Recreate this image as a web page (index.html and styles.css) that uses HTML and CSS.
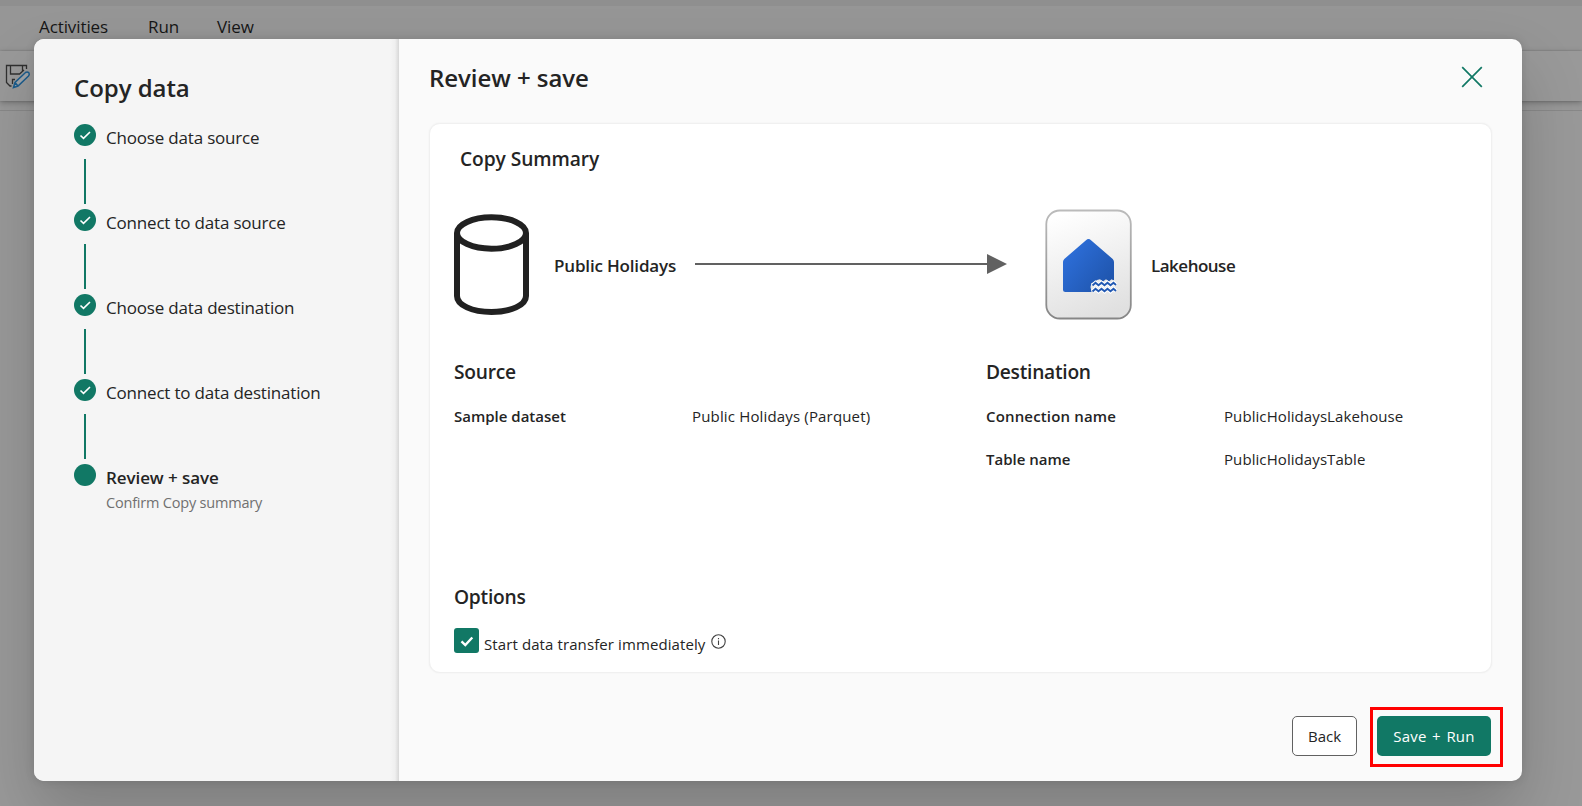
FILE: index.html
```html
<!DOCTYPE html>
<html lang="en">
<head>
<meta charset="utf-8">
<title>Copy data</title>
<link rel="stylesheet" href="styles.css">
</head>
<body>
<div class="workspace">
  <nav class="tabs"><span class="tab t-act">Activities</span><span class="tab t-run">Run</span><span class="tab t-view">View</span></nav>
  <div class="toolbar">
    <svg class="save-icon" width="26" height="26" viewBox="0 0 26 26" fill="none">
      <path d="M21.5 5V1.5H1.5V18.5L5 22H6.500M5.500 1.500V10H14.500L19 6M17.500 1.500V7M7.500 20V15.500H10" stroke="#303030" stroke-width="1.300"/>
      <path d="M8.500 23.500L10 18.500L20.500 8.500Q22.500 7.500 24 9Q24.800 10.500 23.500 12L13 22Z M10 18.500L13 22" stroke="#1b5c8c" stroke-width="1.500" fill="#a0a4a8"/>
    </svg>
  </div>
  <div class="canvas"></div>
</div>
<main class="dialog">
  <aside class="sidebar">
    <h1 class="side-title">Copy data</h1>
    <ol class="steps">
      <li class="step"><span class="dot"><svg width="22" height="22" viewBox="0 0 22 22"><path d="M6.500 11.500L9.500 14.300L16 8" /></svg></span><span class="step-label">Choose data source</span></li>
      <li class="step"><span class="dot"><svg width="22" height="22" viewBox="0 0 22 22"><path d="M6.500 11.500L9.500 14.300L16 8" /></svg></span><span class="step-label">Connect to data source</span></li>
      <li class="step"><span class="dot"><svg width="22" height="22" viewBox="0 0 22 22"><path d="M6.500 11.500L9.500 14.300L16 8" /></svg></span><span class="step-label">Choose data destination</span></li>
      <li class="step"><span class="dot"><svg width="22" height="22" viewBox="0 0 22 22"><path d="M6.500 11.500L9.500 14.300L16 8" /></svg></span><span class="step-label">Connect to data destination</span></li>
      <li class="step"><span class="dot"></span><span class="step-text"><span class="step-label current">Review + save</span><span class="step-sub">Confirm Copy summary</span></span></li>
    </ol>
  </aside>
  <section class="content">
    <header class="head"><h2 class="title">Review + save</h2>
      <svg class="close" width="22" height="22" viewBox="0 0 22 22"><path d="M1.200 1.200L20.800 20.800M20.800 1.200L1.200 20.800"/></svg>
    </header>
    <div class="card">
      <h3 class="summary-title">Copy Summary</h3>
      <div class="flow">
        <svg class="cylinder" width="75" height="102" viewBox="0 0 75 102"><ellipse cx="37.500" cy="19" rx="34.500" ry="15.700"/><path d="M3 19V82C3 91 18 98 37.500 98S72 91 72 82V19"/></svg>
        <span class="node n-src">Public Holidays</span>
        <svg class="arrow" width="312" height="20" viewBox="0 0 312 20"><path d="M0 9H293V11H0ZM292 0L312 10L292 20Z"/></svg>
        <svg class="lake" width="87" height="111" viewBox="0 0 87 111">
          <defs>
            <linearGradient id="tile" x1="0.300" y1="0" x2="0.600" y2="1"><stop offset="0" stop-color="#fff"/><stop offset="1" stop-color="#e0e0e0"/></linearGradient>
            <linearGradient id="edge" x1="0" y1="0" x2="0" y2="1"><stop offset="0" stop-color="#bbb"/><stop offset="1" stop-color="#868686"/></linearGradient>
            <linearGradient id="house" x1="0" y1="0.200" x2="1" y2="1"><stop offset="0" stop-color="#2e70dc"/><stop offset="1" stop-color="#1d51a6"/></linearGradient>
          </defs>
          <rect x="1.300" y="1.500" width="84.500" height="108" rx="13.500" fill="url(#tile)" stroke="url(#edge)" stroke-width="1.800"/>
          <path d="M41 31.200Q43.500 28.800 46 31.200L67.700 50Q69 51.300 69 53V71.500L66.500 70.200L64 72.500L61 70.200L58 72.500L55 70.200L52 71L49 73.500L46.500 74L45.500 78L46.500 83H20.500Q18 83 18 80.500V53Q18 51.300 19.300 50Z" fill="url(#house)"/>
          <path d="M47.500 76.500L50.500 73.800L53.500 76.300L56.500 73.800L59.500 76.300L62.500 73.800L65.500 76.300L68.500 73.800L71 76M47.500 82.500L50.500 79.800L53.500 82.300L56.500 79.800L59.500 82.300L62.500 79.800L65.500 82.300L68.500 79.800L71 82" fill="none" stroke="#fff" stroke-width="4"/>
          <path d="M47.500 76.500L50.500 73.800L53.500 76.300L56.500 73.800L59.500 76.300L62.500 73.800L65.500 76.300L68.500 73.800L71 76M47.500 82.500L50.500 79.800L53.500 82.300L56.500 79.800L59.500 82.300L62.500 79.800L65.500 82.300L68.500 79.800L71 82" fill="none" stroke="#2158b2" stroke-width="1.900"/>
        </svg>
        <span class="node n-dst">Lakehouse</span>
      </div>
      <div class="details">
        <div class="col"><h3 class="col-title">Source</h3>
          <div class="row"><span class="key">Sample dataset</span><span class="val v-wide">Public Holidays (Parquet)</span></div></div>
        <div class="col"><h3 class="col-title">Destination</h3>
          <div class="row"><span class="key k-wide">Connection name</span><span class="val">PublicHolidaysLakehouse</span></div>
          <div class="row"><span class="key">Table name</span><span class="val">PublicHolidaysTable</span></div></div>
      </div>
      <h3 class="options-title">Options</h3>
      <div class="option"><span class="check"><svg width="25" height="25" viewBox="0 0 25 25"><path d="M7.500 13.300L11.300 17L18.300 9.500"/></svg></span><span class="opt-label">Start data transfer immediately</span>
        <svg class="info" width="15" height="15" viewBox="0 0 15 15"><circle cx="7.500" cy="7.500" r="6.700"/><path d="M7.500 6.500V11M7.500 4V5.200"/></svg></div>
    </div>
    <footer class="actions"><button class="btn back">Back</button><span class="highlight"><button class="btn primary">Save + Run</button></span></footer>
  </section>
</main>
</body>
</html>
```
FILE: styles.css
```css
* { box-sizing: border-box; }
body { margin: 0; width: 1582px; height: 806px; overflow: hidden; font-family: "Open Sans", sans-serif; color: #242424; font-size: 17px; }
h1, h2, h3, ol { margin: 0; padding: 0; font-weight: 600; }
.workspace { height: 806px; background: #999; display: flex; flex-direction: column; border-top: 6px solid #8f8f8f; }
.tabs { height: 45px; padding-left: 39px; display: flex; color: #161616; line-height: 42px; background: #969696; letter-spacing: -.1px; }
.tab { flex: none; white-space: nowrap; }
.t-act { width: 109px; }
.t-run { width: 69px; }
.toolbar { height: 50px; background: #999; padding: 13px 5px; box-shadow: 0 2px 6px rgba(0,0,0,.25), 0 0 2px rgba(0,0,0,.2); }
.save-icon { display: block; }
.canvas { margin-top: 9px; flex: 1; border-top: 1px solid #888; background: #999; }
.dialog { position: absolute; left: 34px; top: 39px; width: 1488px; height: 742px; display: flex; border-radius: 10px; background: #fafafa; box-shadow: 0 32px 64px rgba(0,0,0,.18), 0 0 10px rgba(0,0,0,.12); overflow: hidden; }
.sidebar { width: 365px; flex: none; background: linear-gradient(to right, rgba(0,0,0,0) 356px, rgba(0,0,0,.025) 361px, rgba(0,0,0,.12)), #f5f5f5; padding: 29px 40px 0; }
.side-title, .title { font-size: 24px; line-height: 40px; font-weight: 600; white-space: nowrap; letter-spacing: -.05px; }
.title { padding-top: 1px; }
.steps { list-style: none; margin-top: 16px; }
.step { height: 85px; display: flex; position: relative; gap: 10px; font-weight: 400; }
.step:not(:last-child)::after { content: ""; position: absolute; left: 10px; top: 35px; width: 2px; height: 45px; background: #117865; }
.dot { width: 22px; height: 22px; border-radius: 50%; background: #117865; flex: none; }
.dot svg { display: block; fill: none; stroke: #fff; stroke-width: 1.6; }
.step-text { display: flex; flex-direction: column; align-items: flex-start; }
.step-label { line-height: 27px; white-space: nowrap; letter-spacing: -.19px; }
.current { font-weight: 600; letter-spacing: -.08px; }
.step-sub { font-size: 14.5px; line-height: 23px; color: #707070; white-space: nowrap; letter-spacing: -.2px; }
.content { flex: 1; min-width: 0; padding: 18px 30px 0; }
.head { display: flex; justify-content: space-between; height: 66px; }
.close { margin: 9px 9px 0 0; fill: none; stroke: #117865; stroke-width: 1.7; }
.card { height: 550px; border-radius: 11px; background: #fff; border: 1px solid #f0f0f0; box-shadow: 0 0 2px rgba(0,0,0,.06); padding: 20px 24px 0; }
.summary-title, .col-title, .options-title { font-size: 19.2px; line-height: 30px; white-space: nowrap; letter-spacing: -.25px; }
.summary-title { padding-left: 6px; letter-spacing: -.08px; }
.flow { display: flex; align-items: center; height: 111px; margin-top: 35px; }
.cylinder { flex: none; fill: none; stroke: #212121; stroke-width: 6; }
.node { font-weight: 600; line-height: 28px; white-space: nowrap; flex: none; }
.n-src { width: 140px; margin: 3px 0 0 25px; letter-spacing: -.17px; }
.arrow { flex: none; fill: #616161; margin: 0 0 2px 1px; }
.lake { flex: none; margin-left: 38px; }
.n-dst { margin: 3px 0 0 19px; letter-spacing: -.5px; }
.details { display: flex; height: 225px; margin-top: 37px; }
.col { width: 532px; flex: none; }
.col-title { margin-bottom: 15px; }
.row { display: flex; height: 43px; align-items: flex-start; font-size: 15px; line-height: 28px; white-space: nowrap; }
.key { width: 238px; font-weight: 600; flex: none; }
.k-wide { letter-spacing: .16px; }
.val { letter-spacing: .08px; }
.v-wide { letter-spacing: .16px; }
.option { display: flex; margin-top: 16px; }
.check { width: 25px; height: 25px; flex: none; background: #117865; border-radius: 3px; }
.check svg { display: block; fill: none; stroke: #fff; stroke-width: 2.4; }
.opt-label { margin: 2px 0 0 5px; width: 227px; flex: none; font-size: 15px; line-height: 28px; white-space: nowrap; letter-spacing: .1px; }
.info { margin-top: 6px; fill: none; stroke: #424242; stroke-width: 1.1; }
.actions { display: flex; justify-content: flex-end; margin: 34px -11px 0 0; gap: 13px; }
.btn { font: 15px/20px "Open Sans", sans-serif; height: 40px; border-radius: 5px; padding: 0; white-space: nowrap; }
.back { width: 65px; margin-top: 9px; border: 1px solid #616161; background: #fff; color: #242424; }
.highlight { width: 133px; height: 60px; border: 3px solid #f00; padding: 6px 4px; }
.primary { width: 114px; display: block; border: 0; background: #117865; color: #fff; letter-spacing: .2px; word-spacing: 1.4px; }
```
